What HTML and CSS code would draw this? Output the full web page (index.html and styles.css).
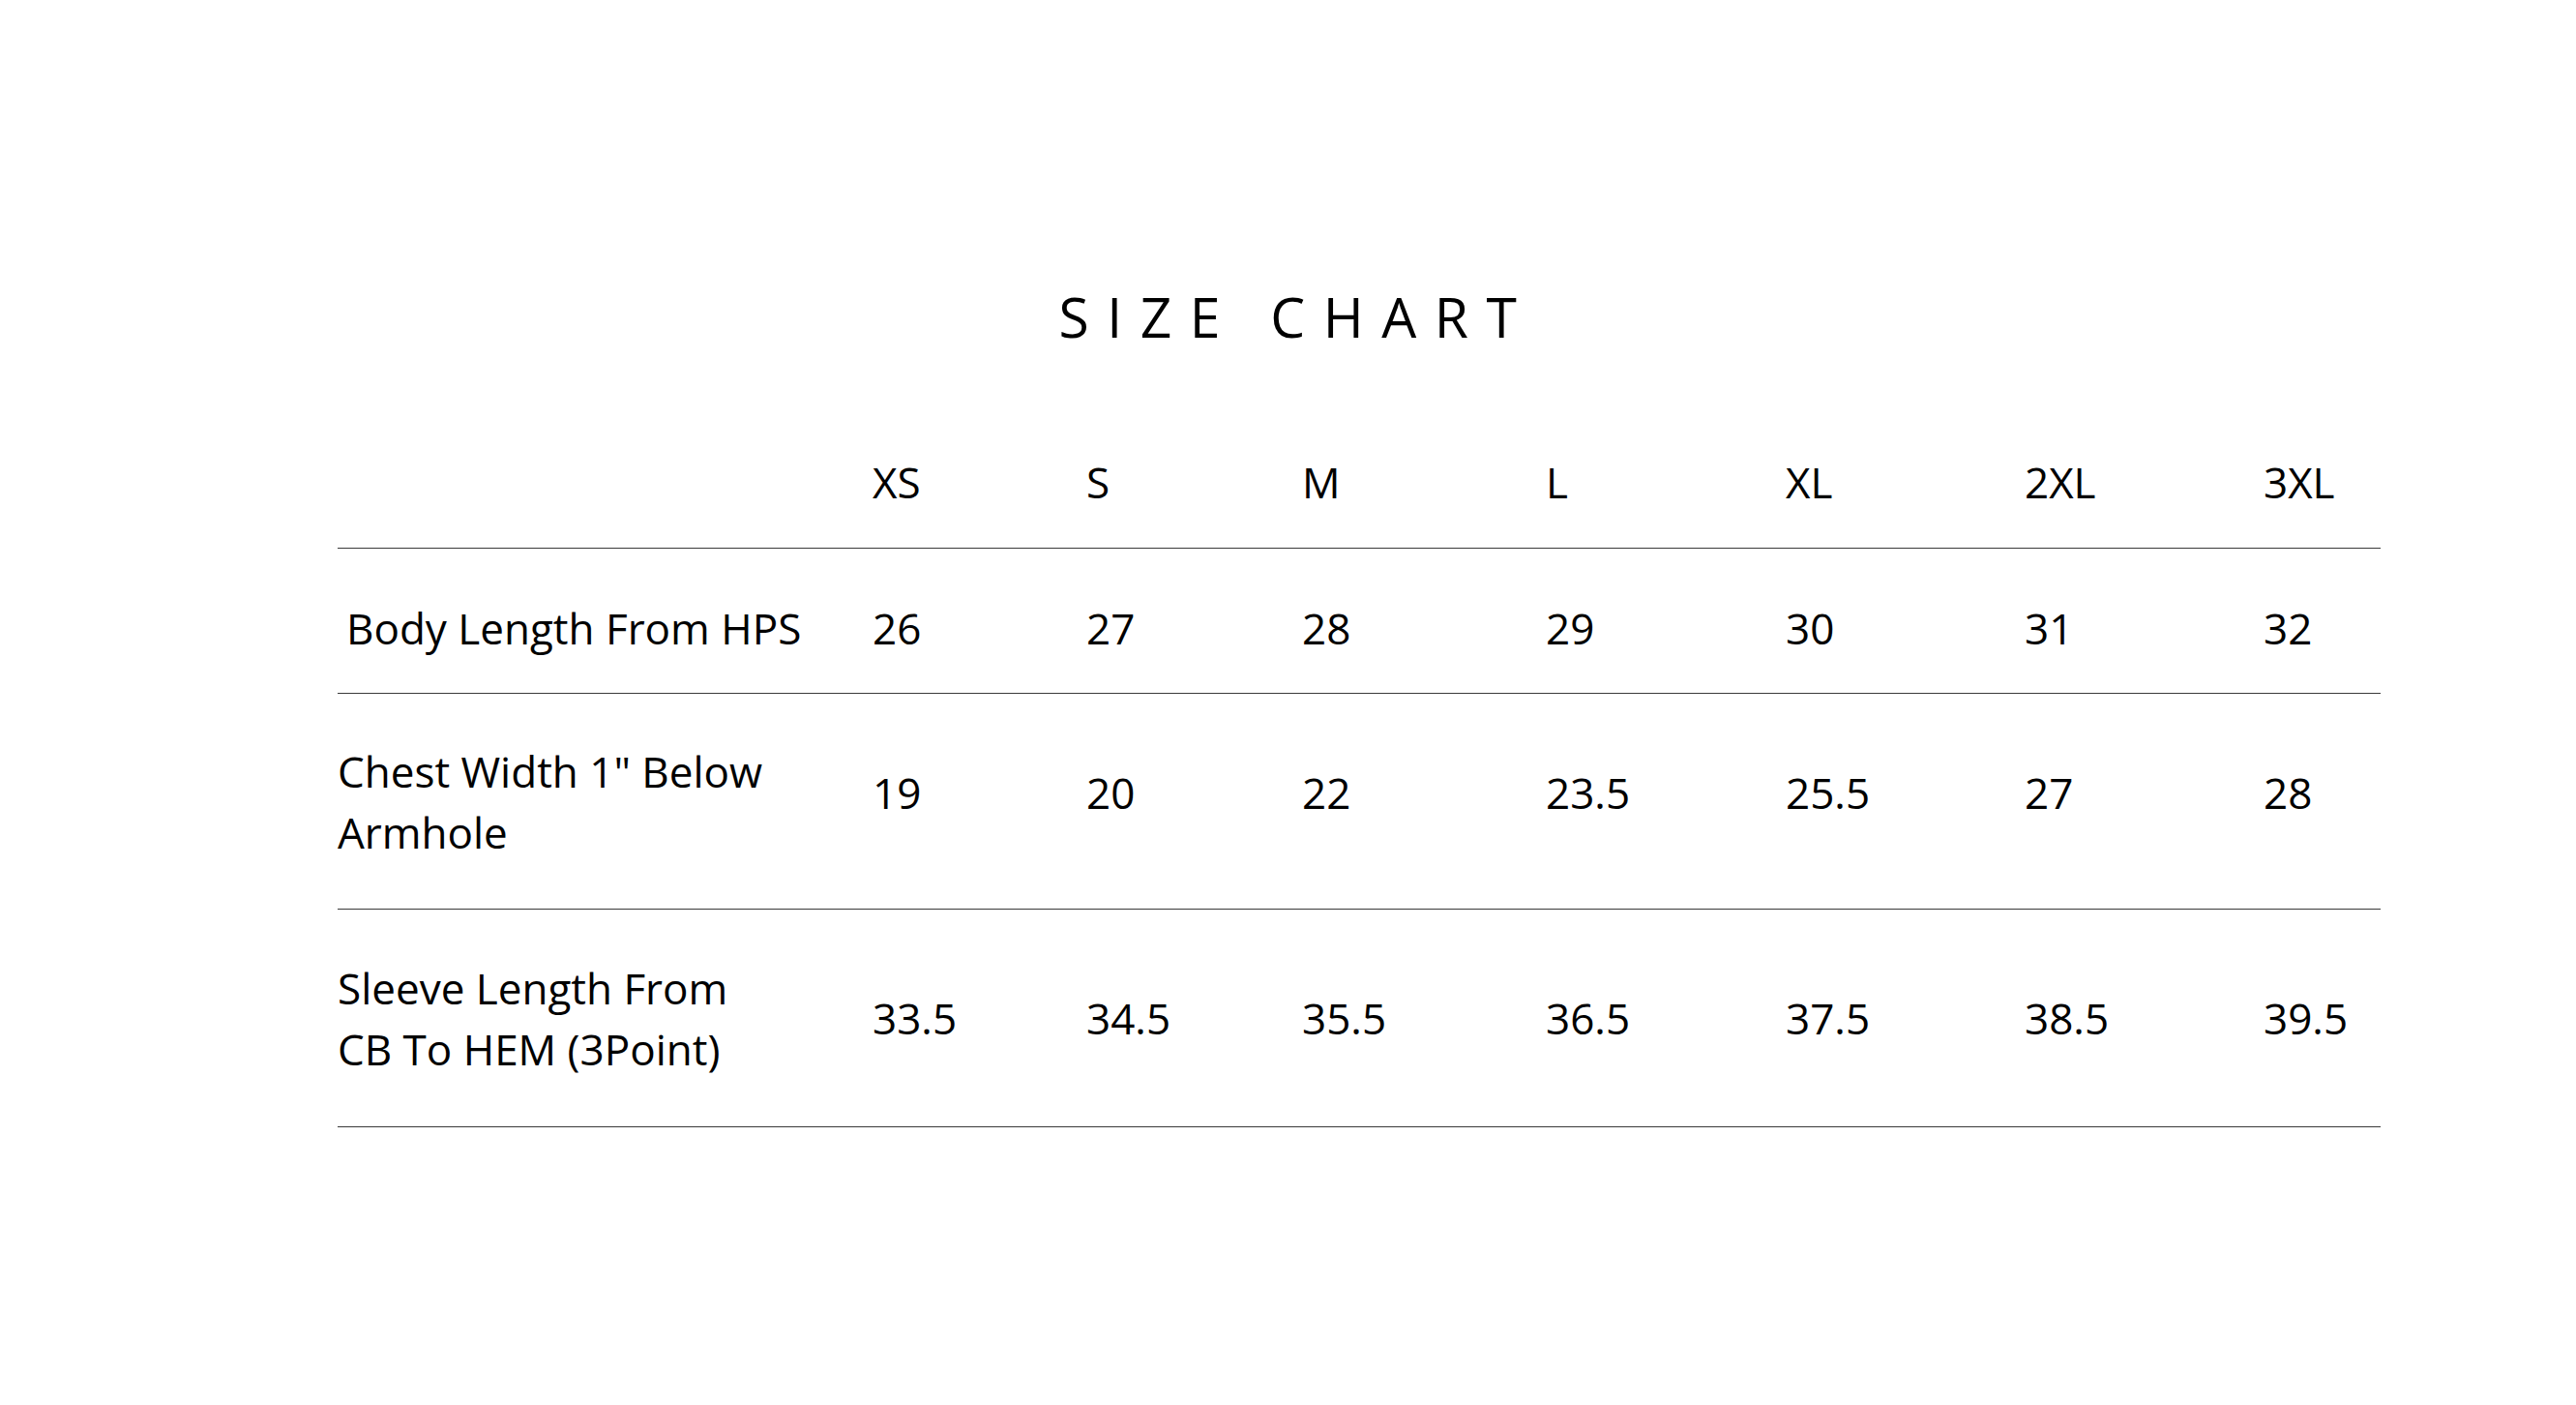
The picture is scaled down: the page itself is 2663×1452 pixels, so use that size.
FILE: index.html
```html
<!DOCTYPE html>
<html lang="en">
<head>
<meta charset="utf-8">
<title>Size Chart</title>
<link rel="stylesheet" href="styles.css">
</head>
<body>
<main class="page">
  <h1 class="title">SIZE CHART</h1>
  <table class="chart">
    <colgroup>
      <col class="c-label">
      <col class="c-xs">
      <col class="c-s">
      <col class="c-m">
      <col class="c-l">
      <col class="c-xl">
      <col class="c-2xl">
      <col class="c-3xl">
    </colgroup>
    <thead>
      <tr class="row-head">
        <th></th>
        <th>XS</th>
        <th>S</th>
        <th>M</th>
        <th>L</th>
        <th>XL</th>
        <th>2XL</th>
        <th>3XL</th>
      </tr>
    </thead>
    <tbody>
      <tr class="row-1">
        <td class="label indent">Body Length From HPS</td>
        <td>26</td>
        <td>27</td>
        <td>28</td>
        <td>29</td>
        <td>30</td>
        <td>31</td>
        <td>32</td>
      </tr>
      <tr class="row-2">
        <td class="label">Chest Width 1" Below<br>Armhole</td>
        <td>19</td>
        <td>20</td>
        <td>22</td>
        <td>23.5</td>
        <td>25.5</td>
        <td>27</td>
        <td>28</td>
      </tr>
      <tr class="row-3">
        <td class="label">Sleeve Length From<br>CB To HEM (3Point)</td>
        <td>33.5</td>
        <td>34.5</td>
        <td>35.5</td>
        <td>36.5</td>
        <td>37.5</td>
        <td>38.5</td>
        <td>39.5</td>
      </tr>
    </tbody>
  </table>
</main>
</body>
</html>
```

FILE: styles.css
```css
html, body {
  margin: 0;
  padding: 0;
  background: #ffffff;
}

body {
  font-family: "Open Sans", "Noto Sans", "Liberation Sans", sans-serif;
  color: #000000;
}

.page {
  width: 2663px;
  padding-top: 299px;
}

.title {
  margin: 0;
  padding-left: 18px;
  text-align: center;
  font-size: 57px;
  line-height: 57px;
  font-weight: 400;
  letter-spacing: 18.5px;
}

.chart {
  margin: 74px 0 0 349px;
  width: 2112px;
  table-layout: fixed;
  border-collapse: collapse;
  border-spacing: 0;
  font-size: 44px;
  line-height: 63px;
  font-weight: 400;
}

.c-label { width: 553px; }
.c-xs { width: 221px; }
.c-s { width: 223px; }
.c-m { width: 252px; }
.c-l { width: 248px; }
.c-xl { width: 247px; }
.c-2xl { width: 247px; }
.c-3xl { width: 121px; }

.chart th,
.chart td {
  padding: 0;
  text-align: left;
  vertical-align: top;
  font-weight: 400;
  white-space: nowrap;
}

.chart tr {
  border-bottom: 1px solid #3a3a3a;
}

.row-head th {
  padding-top: 37px;
  padding-bottom: 36px;
}

.row-1 td {
  padding-top: 51px;
  padding-bottom: 35px;
}

.row-2 td {
  padding-top: 71px;
}

.row-2 td.label {
  padding-top: 49px;
  padding-bottom: 47px;
}

.row-3 td {
  padding-top: 81px;
}

.row-3 td.label {
  padding-top: 50px;
  padding-bottom: 48px;
}

.label.indent {
  padding-left: 9px;
}
```
